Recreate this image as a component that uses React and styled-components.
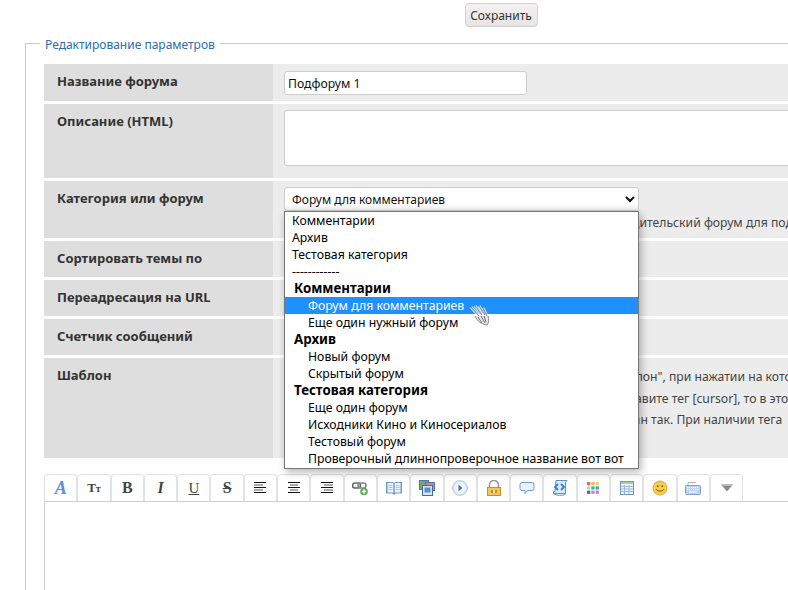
import styled, { createGlobalStyle } from "styled-components";

const GlobalStyle = createGlobalStyle`
  html, body {
    margin: 0;
    overflow: hidden;
    height: 590px;
    background: #fff;
    font-family: "Noto Sans", Tahoma, sans-serif;
    font-size: 12.2px;
    color: #333;
  }
  * { box-sizing: border-box; }
`;

const Page = styled.div`
  width: 1002px;
`;

const SaveBar = styled.div`
  display: flex;
  justify-content: center;
  padding-top: 3px;
  height: 33px;
`;

const SaveButton = styled.button`
  width: 73px;
  height: 24px;
  padding: 0;
  border: 1px solid #d2d0d0;
  border-radius: 4px;
  background: linear-gradient(#f4f2f2, #e6e3e3);
  font: 12px "Noto Sans", sans-serif;
  color: #333;
`;

const Fieldset = styled.fieldset`
  margin: 0 25px;
  padding: 2px 18px 0;
  border: 1px solid #c8c8c8;
  min-width: 0;
`;

const Legend = styled.legend`
  margin-left: -4px;
  padding: 3px 5px 0;
  font-size: 12px;
  line-height: 18px;
  color: #2b6db0;
`;

const Rows = styled.div`
  display: flex;
  flex-direction: column;
  gap: 3px;
  margin-top: 8px;
`;

const Row = styled.div`
  display: grid;
  grid-template-columns: 229px 1fr;
  min-height: ${(p) => p.$height}px;
`;

const Label = styled.div`
  background: #dddedd;
  padding: 8px 13px;
  font-size: 13px;
  font-weight: 700;
  line-height: 18px;
  color: #333;
`;

const Value = styled.div`
  background: #ececec;
  padding: 6px 11px 4px;
  min-width: 0;
`;

const TextInput = styled.input`
  display: block;
  width: 243px;
  height: 24px;
  margin-top: 1px;
  padding: 0 3px;
  border: 1px solid #ccc;
  border-radius: 3px;
  background: #fff;
  font: 12.2px "Noto Sans", sans-serif;
  color: #111;
`;

const TextArea = styled.textarea`
  display: block;
  width: 100%;
  height: 56px;
  border: 1px solid #ccc;
  border-radius: 3px;
  background: #fff;
  resize: none;
`;

const SelectWrap = styled.div`
  position: relative;
  width: 355px;
`;

const Select = styled.select`
  display: block;
  width: 100%;
  height: 24px;
  padding: 0 3px;
  border: 1px solid #ccc;
  border-radius: 3px;
  background: linear-gradient(#fff 70%, #f1f1f1);
  font: 12px "Noto Sans", sans-serif;
  color: #111;
`;

const Dropdown = styled.div`
  position: absolute;
  z-index: 5;
  top: 24px;
  left: 0;
  width: 355px;
  padding: 0 0 1px;
  background: #fff;
  border: 1px solid #767676;
  box-shadow: 2px 3px 8px rgba(0, 0, 0, 0.3);
`;

const Option = styled.div`
  height: 17px;
  line-height: 17px;
  white-space: nowrap;
  padding-left: ${(p) => (p.$group ? 9 : p.$nested ? 23 : 7)}px;
  font-size: ${(p) => (p.$group ? 13.3 : 12.25)}px;
  font-weight: ${(p) => (p.$group ? 700 : 400)};
  color: ${(p) => (p.$selected ? "#fff" : "#000")};
  background: ${(p) => (p.$selected ? "#1e90ff" : "transparent")};
`;

const Cursor = styled.svg`
  position: absolute;
  left: 185px;
  top: 93px;
`;

const Hint = styled.div`
  line-height: 21.5px;
  white-space: nowrap;
  color: #444;
`;

const HintBlock = styled.div`
  padding-top: ${(p) => p.$top}px;
`;

const Toolbar = styled.div`
  display: flex;
  margin-top: 16px;
`;

const ToolButton = styled.div`
  display: flex;
  align-items: center;
  justify-content: center;
  flex: 0 0 33.3px;
  height: 27px;
  border: 1px solid #e2e2e2;
  border-bottom: 0;
  border-radius: 4px 4px 0 0;
  background: #fff;
`;

const Glyph = styled.span`
  font-family: "Liberation Serif", serif;
  font-size: ${(p) => p.$size}px;
  font-weight: ${(p) => (p.$bold ? 700 : 400)};
  font-style: ${(p) => (p.$italic ? "italic" : "normal")};
  text-decoration: ${(p) => p.$line || "none"};
  color: ${(p) => p.$color || "#444"};
  line-height: 16px;
`;

const SmallCap = styled.span`
  font-size: 10px;
`;

const Editor = styled.div`
  height: 140px;
  border: 1px solid #cfcfcf;
  background: #fff;
`;

const groups = [
  { title: "Комментарии", items: ["Форум для комментариев", "Еще один нужный форум"] },
  { title: "Архив", items: ["Новый форум", "Скрытый форум"] },
  {
    title: "Тестовая категория",
    items: [
      "Еще один форум",
      "Исходники Кино и Киносериалов",
      "Тестовый форум",
      "Проверочный длиннопроверочное название вот вот",
    ],
  },
];

function AlignIcon({ lines }) {
  return (
    <svg width="16" height="16" viewBox="0 0 16 16">
      {lines.map(([x1, x2], i) => (
        <line key={i} x1={x1} x2={x2} y1={2.5 + i * 2.5} y2={2.5 + i * 2.5} stroke={i % 2 ? "#555" : "#111"} />
      ))}
    </svg>
  );
}

const LinkIcon = () => (
  <svg width="16" height="16" viewBox="0 0 16 16">
    <rect x="0.5" y="3" width="8" height="5" rx="2.5" fill="none" stroke="#666" strokeWidth="1.6" />
    <rect x="6" y="3" width="8" height="5" rx="2.5" fill="none" stroke="#888" strokeWidth="1.6" />
    <circle cx="12" cy="11.5" r="3.8" fill="#5aa85a" />
    <path d="M12 9.3v4.4M9.8 11.5h4.4" stroke="#fff" strokeWidth="1.4" />
  </svg>
);

const BookIcon = () => (
  <svg width="16" height="16" viewBox="0 0 16 16">
    <path d="M0 2h7l1 1 1-1h7v11.5H9.5L8 15l-1.5-1.5H0z" fill="#6d9ac6" />
    <path d="M1.5 3h5.8v9.5H1.5zM8.7 3h5.8v9.5H8.7z" fill="#eef3f8" />
    <path d="M2.5 5.5h4M2.5 7.5h4M2.5 9.5h4M9.6 5.5h4M9.6 7.5h4M9.6 9.5h4" stroke="#b4c3d3" />
  </svg>
);

const ImagesIcon = () => (
  <svg width="16" height="16" viewBox="0 0 16 16">
    <rect x="0.5" y="0.5" width="9" height="9" fill="#7aa37a" stroke="#4f77a8" />
    <rect x="6.5" y="2.5" width="9" height="8" fill="#c48b95" stroke="#4f77a8" />
    <rect x="3.5" y="5.5" width="10" height="10" fill="#d7e5f3" stroke="#3f6da3" />
    <rect x="5.5" y="7.5" width="6" height="5" fill="#5d8fc7" />
  </svg>
);

const PlayIcon = () => (
  <svg width="16" height="16" viewBox="0 0 16 16">
    <circle cx="8" cy="8" r="7.3" fill="#e3ecf8" stroke="#a9c2e6" />
    <circle cx="8" cy="8" r="4.8" fill="#f5f8fd" />
    <path d="M6.5 4.8 10.5 8l-4 3.2z" fill="#3f73b8" />
  </svg>
);

const LockIcon = () => (
  <svg width="16" height="16" viewBox="0 0 16 16">
    <path d="M3.5 8V5a4.5 4.5 0 0 1 9 0v3" fill="none" stroke="#9a9a9a" strokeWidth="1.6" />
    <rect x="1.5" y="7.5" width="13" height="8" fill="#f2c65a" stroke="#c98f25" />
    <rect x="5" y="10" width="6" height="3" fill="#c98f25" />
    <rect x="7" y="10" width="2" height="3" fill="#fbe6a8" />
  </svg>
);

const SpeechIcon = () => (
  <svg width="16" height="16" viewBox="0 0 16 16">
    <path d="M3 2.5h10a2 2 0 0 1 2 2v4a2 2 0 0 1-2 2H8.5l-2.5 3v-3H3a2 2 0 0 1-2-2v-4a2 2 0 0 1 2-2z" fill="#e8f2fc" stroke="#6d9fd6" />
  </svg>
);

const ScrollIcon = () => (
  <svg width="16" height="16" viewBox="0 0 16 16">
    <path d="M4 .5h11l-1.5 2v11H1.5v-2H3z" fill="#dcebfa" stroke="#5b8fcf" />
    <path d="M1.5 13.5c3 2.5 9 2 12 1" fill="none" stroke="#5b8fcf" />
    <path d="M6 4 3 7l3 3M9 4l3 3-3 3" fill="none" stroke="#2f80e0" strokeWidth="1.8" />
  </svg>
);

const paletteColors = ["#e8675c", "#f0b66a", "#e8d46a", "#b9dca0", "#4fb57a", "#3fa8c8", "#4a6fa8", "#b58ad0", "#ee6fb0"];

const PaletteIcon = () => (
  <svg width="16" height="16" viewBox="0 0 16 16">
    {paletteColors.map((c, i) => (
      <rect key={c} x={2 + (i % 3) * 4.3} y={2 + Math.floor(i / 3) * 4.3} width="3.3" height="3.3" fill={c} />
    ))}
  </svg>
);

const TableIcon = () => (
  <svg width="16" height="16" viewBox="0 0 16 16">
    <rect x="1.5" y="1.5" width="13" height="13" fill="#eef4fb" stroke="#6f97c9" />
    <path d="M2 3h12" stroke="#8fbf6a" strokeWidth="1.4" />
    <path d="M2 6.5h12M2 9h12M2 11.5h12M5.5 5v9M10 5v9" stroke="#9db9dc" />
  </svg>
);

const SmileIcon = () => (
  <svg width="16" height="16" viewBox="0 0 16 16">
    <circle cx="8" cy="8" r="7" fill="#f6cc4f" stroke="#dca63a" />
    <circle cx="5.8" cy="6.2" r="0.9" fill="#7a5a12" />
    <circle cx="10.2" cy="6.2" r="0.9" fill="#7a5a12" />
    <path d="M4.2 9.2c1.5 2.6 6.1 2.6 7.6 0" fill="none" stroke="#7a5a12" />
  </svg>
);

const KeyboardIcon = () => (
  <svg width="16" height="16" viewBox="0 0 16 16">
    <path d="M3 5V2.5h8" fill="none" stroke="#b5b5b5" />
    <rect x="0.5" y="5.5" width="15" height="9" rx="1" fill="#bcd3ee" stroke="#7fa3cf" />
    <path d="M2 7.5h12M2 9.5h12" stroke="#fff" strokeDasharray="1.2 .8" />
    <path d="M4 12h8" stroke="#fff" />
  </svg>
);

const ArrowIcon = () => (
  <svg width="16" height="16" viewBox="0 0 16 16">
    <path d="M2 4.5h12L8 11.5z" fill="#8a8a8a" />
    <path d="M2 4.5h12l-1.2 1.5H3.2z" fill="#b5b5b5" />
  </svg>
);

export default function App() {
  return (
    <Page>
      <GlobalStyle />
      <SaveBar>
        <SaveButton type="button">Сохранить</SaveButton>
      </SaveBar>
      <Fieldset>
        <Legend>Редактирование параметров</Legend>
        <Rows>
          <Row $height={37}>
            <Label>Название форума</Label>
            <Value>
              <TextInput defaultValue="Подфорум 1" />
            </Value>
          </Row>
          <Row $height={74}>
            <Label>Описание (HTML)</Label>
            <Value>
              <TextArea />
            </Value>
          </Row>
          <Row $height={57}>
            <Label>Категория или форум</Label>
            <Value>
              <SelectWrap>
                <Select defaultValue="f">
                  <option value="f">Форум для комментариев</option>
                </Select>
                <Dropdown>
                  <Option>Комментарии</Option>
                  <Option>Архив</Option>
                  <Option>Тестовая категория</Option>
                  <Option>------------</Option>
                  {groups.flatMap((g) => [
                    <Option key={g.title} $group>
                      {g.title}
                    </Option>,
                    ...g.items.map((item) => (
                      <Option key={item} $nested $selected={item === "Форум для комментариев"}>
                        {item}
                      </Option>
                    )),
                  ])}
                  <Cursor width="22" height="22" viewBox="0 0 22 22">
                    <path d="M1 2l8 9M5 1l7 9M9 1l6 9M13 3l4 8" stroke="#fff" strokeWidth="3" opacity="0.7" />
                    <path d="M1 2l8 9M5 1l7 9M9 1l6 9M13 3l4 8" stroke="#808080" strokeWidth="1" />
                    <path d="M5 11c2 5 6 8 12 9 2-2 2-6 1-9" fill="#e8e8e8" stroke="#8a8a8a" />
                    <path d="M8 12l4 6M11 11l4 7M14 11l2 6" stroke="#6e6e6e" />
                  </Cursor>
                </Dropdown>
              </SelectWrap>
              <HintBlock $top={1}>
                <Hint>Если указать форум, то этот форум станет подфорумом. Родительский форум для подфорума выбирается из этого списка</Hint>
              </HintBlock>
            </Value>
          </Row>
          <Row $height={36}>
            <Label>Сортировать темы по</Label>
            <Value />
          </Row>
          <Row $height={36}>
            <Label>Переадресация на URL</Label>
            <Value />
          </Row>
          <Row $height={36}>
            <Label>Счетчик сообщений</Label>
            <Value />
          </Row>
          <Row $height={100}>
            <Label>Шаблон</Label>
            <Value>
              <HintBlock $top={2}>
                <Hint>При создании темы в форме появится особая кнопка "Шаблон", при нажатии на которую</Hint>
                <Hint>в сообщение будет вставлен этот текст. Если в текст вы добавите тег [cursor], то в этом месте</Hint>
                <Hint>будет установлен курсор, а если нет, то и текст будет написан так. При наличии тега</Hint>
              </HintBlock>
            </Value>
          </Row>
        </Rows>
        <Toolbar>
          <ToolButton><Glyph $size={18} $bold $italic $color="#5b8ede">A</Glyph></ToolButton>
          <ToolButton><Glyph $size={13} $bold>T<SmallCap>т</SmallCap></Glyph></ToolButton>
          <ToolButton><Glyph $size={16} $bold>B</Glyph></ToolButton>
          <ToolButton><Glyph $size={16} $bold $italic>I</Glyph></ToolButton>
          <ToolButton><Glyph $size={15} $line="underline">U</Glyph></ToolButton>
          <ToolButton><Glyph $size={16} $bold $line="line-through">S</Glyph></ToolButton>
          <ToolButton><AlignIcon lines={[[2, 14], [2, 11], [2, 14], [2, 11], [2, 14]]} /></ToolButton>
          <ToolButton><AlignIcon lines={[[2, 14], [4, 12], [2, 14], [4, 12], [2, 14]]} /></ToolButton>
          <ToolButton><AlignIcon lines={[[2, 14], [5, 14], [2, 14], [5, 14], [2, 14]]} /></ToolButton>
          <ToolButton><LinkIcon /></ToolButton>
          <ToolButton><BookIcon /></ToolButton>
          <ToolButton><ImagesIcon /></ToolButton>
          <ToolButton><PlayIcon /></ToolButton>
          <ToolButton><LockIcon /></ToolButton>
          <ToolButton><SpeechIcon /></ToolButton>
          <ToolButton><ScrollIcon /></ToolButton>
          <ToolButton><PaletteIcon /></ToolButton>
          <ToolButton><TableIcon /></ToolButton>
          <ToolButton><SmileIcon /></ToolButton>
          <ToolButton><KeyboardIcon /></ToolButton>
          <ToolButton><ArrowIcon /></ToolButton>
        </Toolbar>
        <Editor />
      </Fieldset>
    </Page>
  );
}
